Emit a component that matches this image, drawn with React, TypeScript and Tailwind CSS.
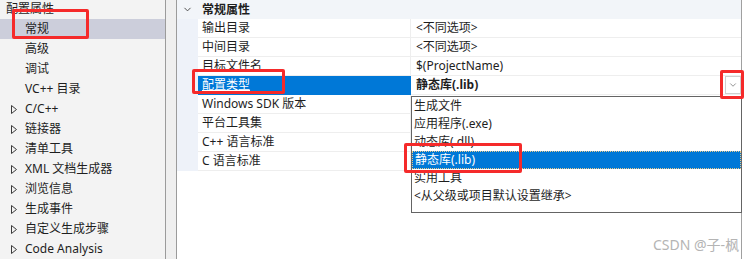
import { ChevronDown } from "lucide-react";

const font = { fontFamily: '"Noto Sans", "Noto Sans CJK SC", sans-serif' };

const tree: { label: string; arrow?: boolean; top?: boolean; active?: boolean }[] = [
  { label: "配置属性", top: true },
  { label: "常规", active: true },
  { label: "高级" },
  { label: "调试" },
  { label: "VC++ 目录" },
  { label: "C/C++", arrow: true },
  { label: "链接器", arrow: true },
  { label: "清单工具", arrow: true },
  { label: "XML 文档生成器", arrow: true },
  { label: "浏览信息", arrow: true },
  { label: "生成事件", arrow: true },
  { label: "自定义生成步骤", arrow: true },
  { label: "Code Analysis", arrow: true },
];

const props: { name: string; value: string; selected?: boolean }[] = [
  { name: "输出目录", value: "<不同选项>" },
  { name: "中间目录", value: "<不同选项>" },
  { name: "目标文件名", value: "$(ProjectName)" },
  { name: "配置类型", value: "静态库(.lib)", selected: true },
  { name: "Windows SDK 版本", value: "" },
  { name: "平台工具集", value: "" },
  { name: "C++ 语言标准", value: "" },
  { name: "C 语言标准", value: "" },
];

const options = ["生成文件", "应用程序(.exe)", "动态库(.dll)", "静态库(.lib)", "实用工具", "<从父级或项目默认设置继承>"];

function Arrow() {
  return (
    <svg width="6" height="9" viewBox="0 0 6 9" className="shrink-0">
      <polygon points="0.5,0.5 5.5,4.5 0.5,8.5" fill="none" stroke="#3a3a3a" strokeWidth="1" />
    </svg>
  );
}

export default function App() {
  return (
    <div className="relative flex h-[259px] w-[746px] overflow-hidden bg-white text-[12px] text-[#1e1e1e]" style={font}>
      {/* tree */}
      <div className="w-[165px] shrink-0 bg-[#f3f3f3]">
        <div className="-mt-[1px]">
          {tree.map((t) => (
            <div key={t.label} className={`flex h-[20px] items-center ${t.active ? "bg-[#cccedb]" : ""} ${t.top ? "pl-[6px]" : "pl-[11px]"}`}>
              {!t.top && (
                <div className="w-[14px] shrink-0">{t.arrow && <Arrow />}</div>
              )}
              <span className="whitespace-nowrap">{t.label}</span>
            </div>
          ))}
        </div>
      </div>
      <div className="w-[12px] shrink-0 border-x border-[#9b9b9b] bg-[#efefef]" />

      {/* property grid */}
      <div className="w-[565px] shrink-0 border-r border-[#a0a0a0]">
        <div className="flex h-[19px] items-center bg-[#f2f5f9]">
          <div className="flex w-[21px] justify-center">
            <ChevronDown size={11} strokeWidth={2} color="#444" />
          </div>
          <span className="pl-[4px] font-bold">常规属性</span>
        </div>
        {props.map((p) => (
          <div key={p.name} className="flex h-[19px]">
            <div className="w-[21px] shrink-0 bg-[#eef2f9]" />
            <div
              className={`flex w-[213px] shrink-0 items-center border-b border-r pl-[4px] ${
                p.selected ? "border-[#0078d7] bg-[#0078d7] text-white" : "border-[#eeeeee]"
              }`}
            >
              <span className={p.selected ? "underline" : ""}>{p.name}</span>
            </div>
            <div className="flex flex-1 items-center border-b border-[#eeeeee] pl-[5px]">
              <span className={p.selected ? "font-bold" : ""}>{p.value}</span>
              {p.selected && (
                <div className="ml-auto flex h-[18px] w-[16px] items-center justify-center border border-[#cfcfcf] bg-white">
                  <ChevronDown size={10} strokeWidth={1.5} color="#555" />
                </div>
              )}
            </div>
          </div>
        ))}
      </div>
      <div className="flex-1 bg-white" />

      {/* dropdown list */}
      <div className="absolute left-[411px] top-[96px] h-[117px] w-[331px] border border-[#646464] bg-white">
        {options.map((o, i) => (
          <div
            key={o}
            className={`flex h-[18px] items-center pl-[2px] ${i === 3 ? "border border-dotted border-[#e8c88a] bg-[#0078d7] text-white" : ""}`}
          >
            {o}
          </div>
        ))}
      </div>

      {/* annotations */}
      <div className="absolute left-[12px] top-[9px] h-[30px] w-[77px] rounded-[2px] border-[3px] border-[#f52a2a]" />
      <div className="absolute left-[192px] top-[69px] h-[25px] w-[93px] rounded-[2px] border-[3px] border-[#f52a2a]" />
      <div className="absolute left-[720px] top-[70px] h-[29px] w-[24px] rounded-[2px] border-[3px] border-[#f52a2a]" />
      <div className="absolute left-[404px] top-[143px] h-[30px] w-[118px] rounded-[2px] border-[3px] border-[#f52a2a]" />

      <div className="absolute left-[653px] top-[234px] text-[14px] text-[#b4b4b4]">CSDN @子-枫</div>
    </div>
  );
}
